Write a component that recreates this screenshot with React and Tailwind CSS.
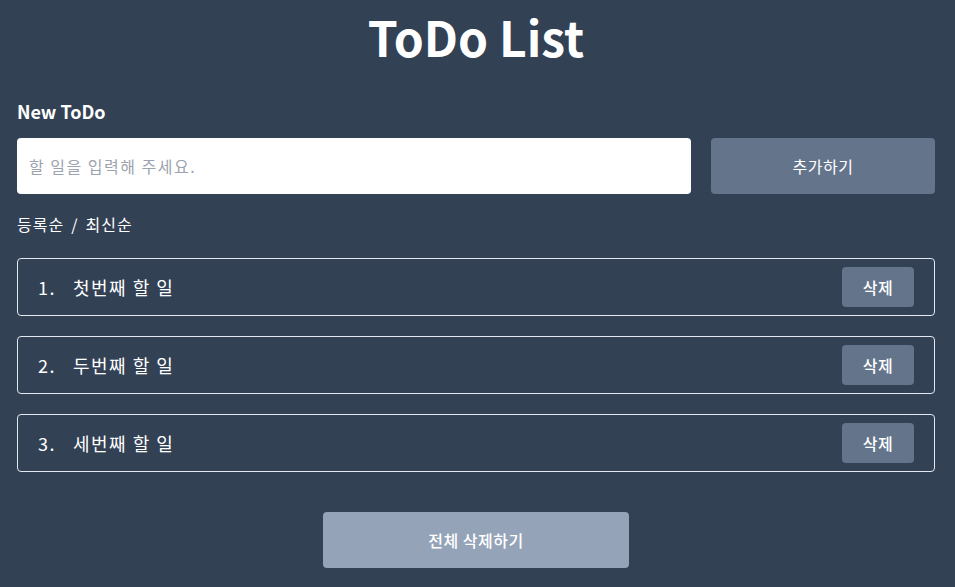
import React, { useState } from 'react';

const initialTodos = [
  { id: 1, text: '첫번째 할 일' },
  { id: 2, text: '두번째 할 일' },
  { id: 3, text: '세번째 할 일' },
];

const App = () => {
  const [todos, setTodos] = useState(initialTodos);
  const [input, setInput] = useState('');

  const addTodo = () => {
    if (!input.trim()) return;
    setTodos([...todos, { id: Date.now(), text: input }]);
    setInput('');
  };

  const removeTodo = (id) => setTodos(todos.filter((t) => t.id !== id));

  return (
    <div className="min-h-screen bg-[#334155] pl-[17px] pr-5 pb-5 text-white font-['Noto_Sans_CJK_KR','Noto_Sans',sans-serif]">
      <h1 className="pt-[6px] text-center text-[48px] font-bold leading-[60px]">ToDo List</h1>

      {/* New ToDo */}
      <h2 className="mt-[32px] text-[18px] font-bold leading-[26px]">New ToDo</h2>
      <div className="mt-[14px] flex gap-5">
        <input
          value={input}
          onChange={(e) => setInput(e.target.value)}
          placeholder="할 일을 입력해 주세요."
          className="h-14 min-w-0 flex-1 rounded-[4px] bg-white px-3 text-[16px] tracking-[1.5px] text-gray-800 outline-none placeholder:text-[#9ca3af]"
        />
        <button
          onClick={addTodo}
          className="h-14 w-[224px] shrink-0 rounded-[4px] bg-[#64748b] text-[16px] tracking-[0.5px] text-white"
        >
          추가하기
        </button>
      </div>

      {/* Sort */}
      <div className="mt-[18px] flex gap-[7px] text-[16px] leading-[24px] tracking-[1px]">
        <button>등록순</button>
        <span>/</span>
        <button>최신순</button>
      </div>

      {/* List */}
      <ul className="mt-[22px] flex flex-col gap-5">
        {todos.map((todo, index) => (
          <li
            key={todo.id}
            className="flex h-[58px] items-center justify-between rounded-[4px] border border-[#e2e8f0] pl-5 pr-5"
          >
            <div className="flex items-center text-[18px] tracking-[1.5px]">
              <span className="w-[35px]">{index + 1}.</span>
              <span>{todo.text}</span>
            </div>
            <button
              onClick={() => removeTodo(todo.id)}
              className="h-10 w-[72px] rounded-[4px] bg-[#64748b] text-[16px] font-medium tracking-[0.5px]"
            >
              삭제
            </button>
          </li>
        ))}
      </ul>

      <div className="mt-[40px] flex justify-center">
        <button
          onClick={() => setTodos([])}
          className="h-14 w-[306px] rounded-[4px] bg-[#94a3b8] text-[16px] font-medium tracking-[0.5px]"
        >
          전체 삭제하기
        </button>
      </div>
    </div>
  );
};

export default App;
